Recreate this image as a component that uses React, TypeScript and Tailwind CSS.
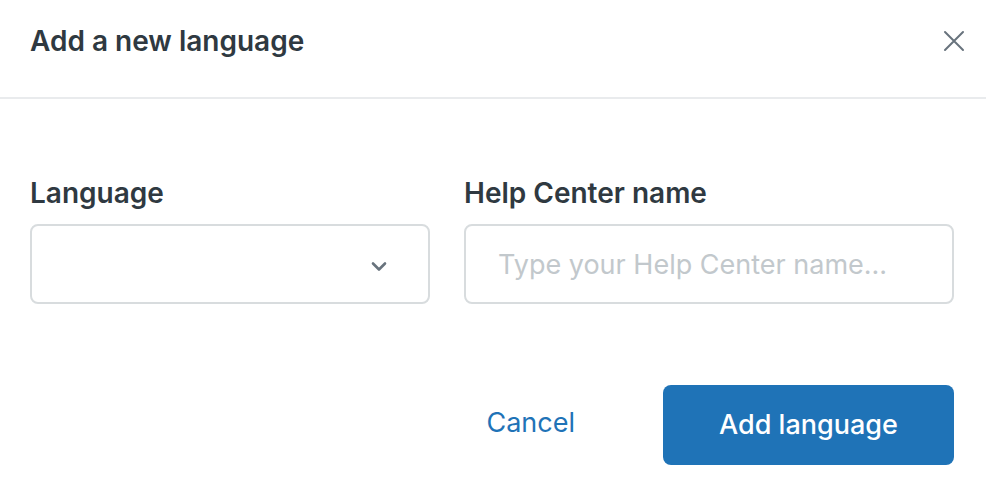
import React from "react";

export default function App() {
  return (
    <div className="w-[986px] h-[480px] bg-white overflow-hidden" style={{ fontFamily: "Inter, 'Liberation Sans', sans-serif" }}>
      <div className="h-[99px] border-b-2 border-[#e9ebed] flex items-center justify-between pl-[30px] pr-[17px]">
        <h1 className="text-[28px] font-semibold text-[#2f3941] leading-[36px] -mt-[16px]">Add a new language</h1>
        <button className="w-[30px] h-[30px] flex items-center justify-center -mt-[16px]">
          <svg width="22" height="22" viewBox="0 0 22 22" fill="none" stroke="#68737d" strokeWidth="2" strokeLinecap="round">
            <path d="M2 2L20 20M20 2L2 20" />
          </svg>
        </button>
      </div>
      <div className="flex gap-[34px] px-[30px] pt-[78px]">
        <div className="flex flex-col w-[400px]">
          <label className="text-[28px] font-semibold text-[#2f3941] leading-[32px]">Language</label>
          <div className="mt-[15px] h-[80px] border-2 border-[#d8dcde] rounded-[8px] flex items-center justify-end pr-[41px]">
            <svg className="mt-[5px]" width="16" height="11" viewBox="0 0 16 11" fill="none" stroke="#68737d" strokeWidth="2.6" strokeLinecap="round" strokeLinejoin="round">
              <path d="M2 2.5L8 8.5L14 2.5" />
            </svg>
          </div>
        </div>
        <div className="flex flex-col w-[490px]">
          <label className="text-[28px] font-semibold text-[#2f3941] leading-[32px]">Help Center name</label>
          <div className="mt-[15px] h-[80px] border-2 border-[#d8dcde] rounded-[8px] flex items-center pl-[32px] pt-[3px]">
            <input
              className="w-full outline-none text-[27px] text-[#2f3941] placeholder:text-[#c2c8cc] bg-transparent"
              placeholder="Type your Help Center name..."
            />
          </div>
        </div>
      </div>
      <div className="flex justify-end items-center px-[32px] mt-[81px] gap-[88px]">
        <button className="text-[27px] text-[#1f73b7] -mt-[4px]">Cancel</button>
        <button className="w-[291px] h-[80px] bg-[#1f73b7] rounded-[8px] text-[27px] text-white font-medium">Add language</button>
      </div>
    </div>
  );
}
